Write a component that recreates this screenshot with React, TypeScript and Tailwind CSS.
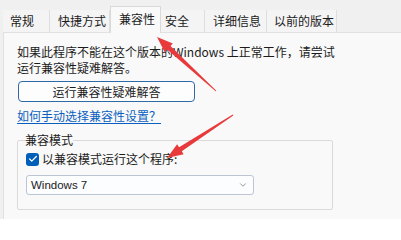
import { Check, ChevronDown } from 'lucide-react';

const tabs = [
  { label: '常规', w: 'w-[47px]', pl: 'pl-[7px]' },
  { label: '快捷方式', w: 'w-[60px]', pl: 'pl-[8px]' },
  { label: '兼容性', w: 'w-[51px]', pl: 'pl-[8px]', active: true },
  { label: '安全', w: 'w-[44px]', pl: 'pl-[4px]' },
  { label: '详细信息', w: 'w-[62px]', pl: 'pl-[8px]' },
  { label: '以前的版本', w: 'w-[70px]', pl: 'pl-[7px]' },
];

export default function App() {
  return (
    <div className="relative flex h-[219px] w-[401px] flex-col overflow-hidden bg-[#f0f0f0] font-['Noto_Sans_CJK_SC',sans-serif] text-[12px] leading-[16px] text-[#1b1b1b]">
      {/* Tabs */}
      <div className="flex h-[32px] flex-shrink-0 items-end pl-[3px]">
        {tabs.map((t) =>
          t.active ? (
            <div
              key={t.label}
              className={`relative z-10 -mb-px flex h-[27px] items-center border-x border-t border-[#d9d9d9] bg-[#f9f9f9] pb-[2px] ${t.w} ${t.pl}`}
            >
              {t.label}
            </div>
          ) : (
            <div
              key={t.label}
              className={`flex h-[22px] items-center border-r border-[#dedede] bg-[#f4f4f4] ${t.w} ${t.pl}`}
            >
              {t.label}
            </div>
          ),
        )}
      </div>

      {/* Content panel */}
      <div className="ml-[3px] flex-1 border-l border-t border-[#e1e1e1] bg-[#f9f9f9] pl-[13px] pt-[11px]">
        <p>
          如果此程序不能在这个版本的Windows 上正常工作，请尝试
          <br />
          运行兼容性疑难解答。
        </p>

        <button className="ml-px mt-[5px] flex h-[21px] w-[177px] items-center justify-center rounded-[4px] border border-[#2f6aa8] bg-[#fdfdfd]">
          运行兼容性疑难解答
        </button>

        <a className="mt-[6px] block w-fit text-[#0a5fbf] underline underline-offset-2">
          如何手动选择兼容性设置？
        </a>

        <fieldset className="mt-[8px] h-[78px] w-[316px] rounded-[2px] border border-[#dadada] px-[8px]">
          <legend className="-ml-px px-0">兼容模式</legend>
          <label className="mt-[3px] flex h-[16px] items-center gap-[3px]">
            <span className="flex h-[13px] w-[13px] items-center justify-center rounded-[3px] bg-[#005fb8]">
              <Check className="h-[10px] w-[10px] text-white" strokeWidth={3} />
            </span>
            以兼容模式运行这个程序:
          </label>
          <div className="mt-[8px] flex h-[20px] w-[228px] items-center justify-between rounded-[3px] border border-[#bcc6d3] bg-[#fcfdfe] pl-[4px] pr-[5px] font-['Liberation_Sans',sans-serif] text-[11.5px]">
            <span>Windows 7</span>
            <ChevronDown className="h-[10px] w-[10px] text-[#5a5a5a]" strokeWidth={1.5} />
          </div>
        </fieldset>
      </div>

      {/* Red annotation arrows */}
      <svg className="pointer-events-none absolute inset-0" width="401" height="219" viewBox="0 0 401 219">
        <polygon
          fill="#e83a3a"
          points="157,37 172.85,43.4 170.5,46 216.34,90.63 215.66,91.37 167.1,49.6 164.75,52.2"
        />
        <polygon
          fill="#e83a3a"
          points="167,158 183.67,154.3 181.76,151.36 233.27,115.42 232.73,114.58 179.04,147.17 177.13,144.24"
        />
      </svg>
    </div>
  );
}
